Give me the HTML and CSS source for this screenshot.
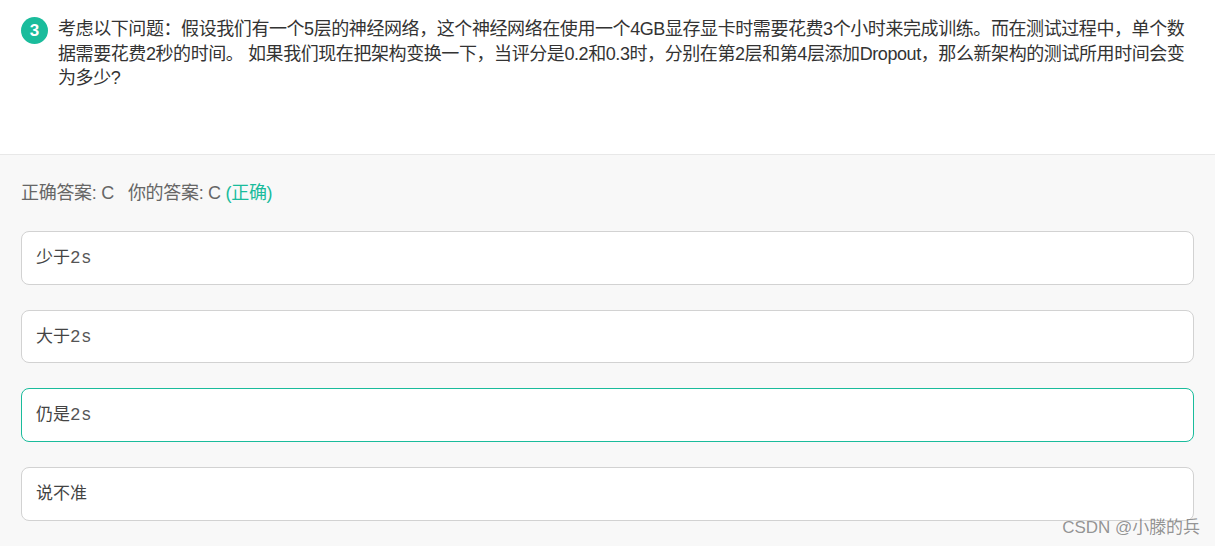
FILE: index.html
```html
<!DOCTYPE html>
<html lang="zh-CN">
<head>
  <meta charset="UTF-8" />
  <title>测试结果</title>
  <link rel="stylesheet" href="styles.css">
</head>
<body>
  <section class="question">
    <span class="question-num">3</span>
    <p class="question-text">考虑以下问题：假设我们有一个5层的神经网络，这个神经网络在使用一个4GB显存显卡时需要花费3个小时来完成训练。而在测试过程中，单个数据需要花费2秒的时间。 如果我们现在把架构变换一下，当评分是0.2和0.3时，分别在第2层和第4层添加Dropout，那么新架构的测试所用时间会变为多少?</p>
  </section>

  <section class="answers">
    <div class="result">
      正确答案: C<span class="result-gap">你的答案: C</span> <span class="result-ok">(正确)</span>
    </div>
    <div class="option">少于<code>2s</code></div>
    <div class="option">大于<code>2s</code></div>
    <div class="option option-right">仍是<code>2s</code></div>
    <div class="option">说不准</div>
  </section>

  <div class="watermark">CSDN @小滕的兵</div>
</body>
</html>
```

FILE: styles.css
```css
html,
body {
  margin: 0;
  height: 100%;
  overflow: hidden;
}

body {
  font-family: "Liberation Sans", "Noto Sans CJK SC", sans-serif;
  background: #f8f8f8;
  color: #333;
}

.question {
  display: flex;
  align-items: flex-start;
  gap: 10px;
  height: 155px;
  box-sizing: border-box;
  padding: 17px 21px 0;
  background: #fff;
  border-bottom: 1px solid #e8e8e8;
}

.question-num {
  flex: none;
  width: 27px;
  height: 27px;
  border-radius: 50%;
  background: #1abc9c;
  color: #fff;
  font-size: 17px;
  font-weight: bold;
  line-height: 27px;
  text-align: center;
}

.question-text {
  margin: 0;
  font-size: 18px;
  line-height: 24.5px;
  letter-spacing: -0.42px;
}

.answers {
  padding: 26px 21px 0;
}

.result {
  height: 25px;
  margin-bottom: 25px;
  font-size: 18px;
  line-height: 25px;
  letter-spacing: -0.3px;
  color: #666;
}

.result-gap {
  margin-left: 14px;
}

.result-ok {
  color: #1abc9c;
}

.option {
  height: 53.7px;
  box-sizing: border-box;
  margin-bottom: 25px;
  padding-left: 14px;
  background: #fff;
  border: 1px solid #d2d2d2;
  border-radius: 8px;
  color: #444;
  font-size: 17px;
  line-height: 51px;
}

.option code {
  font-family: "Liberation Mono", monospace;
  font-size: 17.5px;
  letter-spacing: 0.4px;
  color: #555;
}

.option-right {
  border-color: #1abc9c;
}

.watermark {
  position: absolute;
  right: 15px;
  top: 517px;
  font-size: 17px;
  line-height: 22px;
  letter-spacing: -0.05px;
  color: rgba(90, 90, 90, 0.65);
}
```
